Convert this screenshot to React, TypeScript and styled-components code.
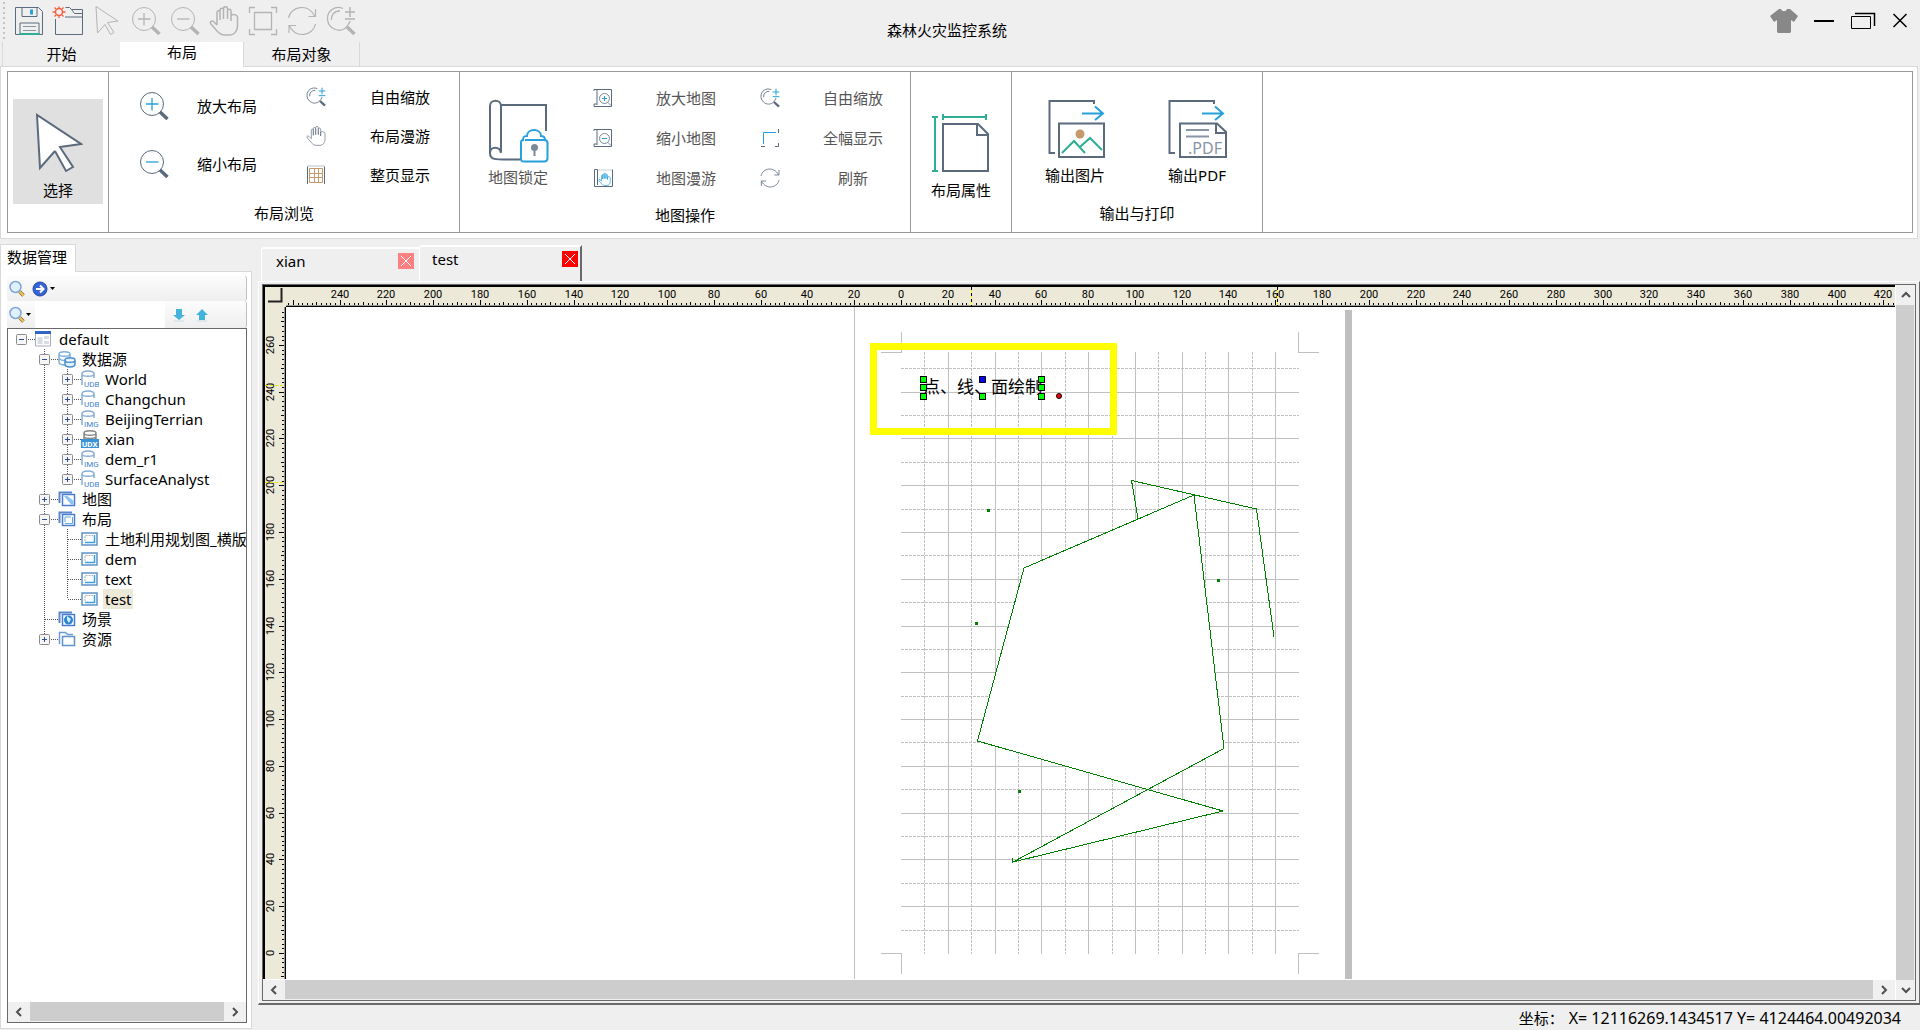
import React from "react";
import styled, { createGlobalStyle, css } from "styled-components";

const SLATE = "#5b6b7d";
const BLUE = "#27a0dc";
const TEAL = "#2fae95";
const TAN = "#c49a6c";
const MUTED = "#b4b4b4";
const LINE = "#d9d9d9";
const FRAME = "#696969";

const GlobalStyle = createGlobalStyle`
  *, *::before, *::after { box-sizing: border-box; }
  html, body, #root { height: 100%; }
  body {
    margin: 0;
    background: #efefef;
    color: #000;
    font-family: "Noto Sans", "Noto Sans CJK SC", sans-serif;
    font-size: 15px;
    line-height: 20px;
    overflow: hidden;
  }
  button, input { font: inherit; color: inherit; }
  button { border: 0; padding: 0; background: none; }
  svg { display: block; flex: none; }
`;

/* ---------- window shell ---------- */

const Shell = styled.div`
  height: 100vh;
  display: flex;
  flex-direction: column;
`;

const TitleBar = styled.header`
  display: grid;
  grid-template-columns: 1fr auto 1fr;
  height: 42px;
`;

const QuickTools = styled.div`
  display: flex;
  align-items: center;
  height: 41px;
  padding-left: 3px;
`;

const Grip = styled.span`
  width: 4px;
  height: 38px;
  margin-right: 2px;
  background: repeating-linear-gradient(#c4c4c4 0 2px, transparent 2px 5px) left / 2px 100% no-repeat;
`;

const QuickButton = styled.button`
  width: 39px;
  height: 36px;
  display: flex;
  align-items: center;
  justify-content: center;
`;

const AppTitle = styled.h1`
  margin: 0 26px 0 0;
  padding-top: 20px;
  font-size: 15px;
  font-weight: 400;
  line-height: 20px;
`;

const WindowButtons = styled.div`
  display: flex;
  justify-content: flex-end;
  align-items: center;
  gap: 15px;
  height: 42px;
  padding-right: 11px;
`;

const WindowButton = styled.button`
  display: flex;
`;

/* ---------- ribbon ---------- */

const RibbonTabs = styled.nav`
  display: flex;
  height: 24px;
  padding-left: 2px;
`;

const RibbonTab = styled.button<{ $active?: boolean; $width: number }>`
  width: ${(p) => p.$width}px;
  height: 24px;
  border-left: 1px solid ${(p) => (p.$active ? "#fff" : LINE)};
  ${(p) =>
    p.$active
      ? css`
          height: 25px;
          padding-bottom: 5px;
          background: #fff;
          z-index: 1;
        `
      : ""}
  &:last-child { border-right: 1px solid ${LINE}; }
`;

const RibbonFrame = styled.section`
  margin-right: 2px;
  padding: 4px 4px 5px 6px;
  border: 1px solid ${LINE};
  background: #fff;
`;

const Ribbon = styled.div`
  display: flex;
  height: 162px;
  border: 1px solid #999;
`;

const Group = styled.div<{ $width: number }>`
  display: flex;
  flex-direction: column;
  width: ${(p) => p.$width}px;
  border-right: 1px solid #999;
`;

const GroupBody = styled.div<{ $inset?: number; $gap?: number }>`
  flex: 1;
  display: flex;
  align-items: flex-start;
  justify-content: ${(p) => (p.$inset === undefined ? "center" : "flex-start")};
  padding-left: ${(p) => p.$inset ?? 0}px;
  gap: ${(p) => p.$gap ?? 0}px;
`;

const GroupTitle = styled.div<{ $low?: boolean }>`
  text-align: center;
  padding-bottom: ${(p) => (p.$low ? 7 : 9)}px;
`;

const BigButton = styled.button<{ $top: number; $disabled?: boolean }>`
  display: flex;
  flex-direction: column;
  align-items: center;
  gap: ${(p) => (p.$disabled ? 4 : 6)}px;
  min-width: 60px;
  margin-top: ${(p) => p.$top}px;
  color: ${(p) => (p.$disabled ? "#555" : "#000")};
`;

const SelectedTile = styled(BigButton)`
  width: 90px;
  height: 105px;
  padding-top: 13px;
  background: #e0e0e0;
`;

const ToolColumn = styled.div<{ $top: number; $row: number }>`
  display: grid;
  grid-auto-rows: ${(p) => p.$row}px;
  padding-top: ${(p) => p.$top}px;
`;

const ToolButton = styled.button<{ $gap: number; $disabled?: boolean }>`
  display: flex;
  align-items: center;
  gap: ${(p) => p.$gap}px;
  color: ${(p) => (p.$disabled ? "#555" : "#000")};
  span { width: 60px; text-align: center; }
`;

/* ---------- workspace ---------- */

const Workspace = styled.div`
  flex: 1;
  min-height: 0;
  display: grid;
  grid-template-columns: 252px minmax(0, 1fr);
  column-gap: 6px;
`;

const Sidebar = styled.aside`
  display: flex;
  flex-direction: column;
  min-height: 0;
  padding: 5px 0 1px;
`;

const SidebarTab = styled.div`
  align-self: flex-start;
  height: 28px;
  margin-bottom: -1px;
  padding: 2px 8px 4px 6px;
  border: 1px solid ${LINE};
  border-bottom: 0;
  background: #fff;
  z-index: 1;
`;

const SidebarPanel = styled.div`
  flex: 1;
  min-height: 0;
  display: flex;
  flex-direction: column;
  padding: 4px 4px 5px 6px;
  border: 1px solid ${LINE};
  background: #fff;
`;

const PanelBar = styled.div<{ $height: number }>`
  display: flex;
  align-items: center;
  height: ${(p) => p.$height}px;
  border-right: 1px solid #c0c0c0;
  border-radius: 3px;
  background: linear-gradient(#fcfcfc, #efefef);
`;

const IconButton = styled.button<{ $lead: number; $gap?: number }>`
  display: flex;
  align-items: center;
  gap: ${(p) => p.$gap ?? 0}px;
  margin-left: ${(p) => p.$lead}px;
`;

const SearchInput = styled.input`
  width: 130px;
  height: 100%;
  min-width: 0;
  margin-left: 4px;
  border: 0;
  background: #fff;
  outline: 0;
`;

const TreeBox = styled.div`
  flex: 1;
  min-height: 0;
  display: flex;
  flex-direction: column;
  border: 1px solid ${FRAME};
`;

const Tree = styled.ul`
  flex: 1;
  min-height: 0;
  margin: 0;
  padding: 0 0 0 8px;
  list-style: none;
  overflow: hidden;
`;

const TreeRow = styled.li`
  display: flex;
  align-items: center;
  height: 20px;
  white-space: nowrap;
`;

const IconSlot = styled.span`
  width: 22px;
  flex: none;
`;

const TreeLabel = styled.span<{ $selected?: boolean }>`
  padding: 0 2px;
  background: ${(p) => (p.$selected ? "#ece9d8" : "transparent")};
`;

const BranchButton = styled.button`
  display: flex;
`;

/* ---------- documents ---------- */

const Main = styled.main`
  display: flex;
  flex-direction: column;
  min-width: 0;
  min-height: 0;
`;

const DocTabs = styled.div`
  display: flex;
  align-items: flex-end;
  height: 42px;
  padding-left: 3px;
`;

const DocTab = styled.div<{ $active?: boolean }>`
  display: flex;
  align-items: flex-start;
  justify-content: space-between;
  width: ${(p) => (p.$active ? 163 : 158)}px;
  height: ${(p) => (p.$active ? 36 : 34)}px;
  padding: 4px ${(p) => (p.$active ? 2 : 5)}px 0 ${(p) => (p.$active ? 12 : 14)}px;
  line-height: 16px;
  border-top: 2px solid #fff;
  border-left: 1px solid #fff;
  border-right: ${(p) => (p.$active ? `2px solid ${FRAME}` : "0")};
  border-radius: 3px 0 0 0;
`;

const CloseButton = styled.button<{ $active?: boolean }>`
  display: flex;
  background: ${(p) => (p.$active ? "#f00" : "#ff8080")};
`;

const DocFrame = styled.div`
  flex: 1;
  min-height: 0;
  display: flex;
  padding: 2px 3px;
  border: 1px solid #fff;
  border-right-color: ${FRAME};
  border-bottom: 2px solid ${FRAME};
`;

const Viewport = styled.div`
  flex: 1;
  min-width: 0;
  display: grid;
  grid-template-columns: minmax(0, 1fr) 20px;
  border: 1px solid ${FRAME};
`;

const ViewColumn = styled.div`
  display: flex;
  flex-direction: column;
  min-width: 0;
  min-height: 0;
`;

const RuledArea = styled.div`
  flex: 1;
  min-height: 0;
  display: grid;
  grid-template-columns: 21px minmax(0, 1fr);
  grid-template-rows: 20px minmax(0, 1fr);
  border-left: 2px solid #000;
  border-top: 2px solid #000;
  background: #ece9d8;
`;

const RulerCell = styled.div<{ $side: "corner" | "top" | "left" }>`
  min-width: 0;
  min-height: 0;
  background: #ece9d8;
  ${(p) => (p.$side === "top" ? "border-bottom: 1px solid #000; box-shadow: inset 0 -1px #999;" : "")}
  ${(p) => (p.$side === "left" ? "border-right: 1px solid #000; box-shadow: inset -1px 0 #999; overflow: hidden;" : "")}
`;

const Canvas = styled.div`
  min-width: 0;
  min-height: 0;
  overflow: hidden;
  background: #fff;
`;

const ScrollTrack = styled.div<{ $vertical?: boolean }>`
  display: flex;
  flex: none;
  flex-direction: ${(p) => (p.$vertical ? "column" : "row")};
  ${(p) => (p.$vertical ? "width: 20px; border-left: 1px solid #fff;" : "height: 21px; border-top: 1px solid #fff;")}
  background: #f0f0f0;
`;

const ScrollButton = styled.button`
  display: flex;
  align-items: center;
  justify-content: center;
  min-width: 19px;
  min-height: 20px;
  ${ScrollTrack} > &[data-axis="x"] { width: 22px; }
`;

const ScrollThumb = styled.div<{ $vertical?: boolean }>`
  flex: 1;
  background: #cdcdcd;
  ${(p) => (p.$vertical ? "margin-right: 1px;" : "margin-bottom: 1px;")}
`;

const StatusBar = styled.footer`
  height: 25px;
  padding: 3px 19px 0 0;
  display: flex;
  justify-content: flex-end;
  gap: 5px;
`;

const Coordinates = styled.output`
  font-size: 16px;
`;

/* ---------- icons ---------- */

const Svg = ({ w, h, box, children }: { w: number; h: number; box?: string; children: React.ReactNode }) => (
  <svg width={w} height={h} viewBox={box ?? `0 0 ${w} ${h}`} fill="none" aria-hidden="true">
    {children}
  </svg>
);

const SaveIcon = () => (
  <Svg w={30} h={30}>
    <path d="M1.500 1.500h23l4 4v23h-27z" stroke={SLATE} />
    <path d="M8 1.500v9h15v-9" stroke={SLATE} />
    <path d="M16 3.500h3v5h-3z" fill={BLUE} />
    <path d="M6 28V17h19v11" stroke={SLATE} />
    <path d="M9 20.500h13M9 24.500h13" stroke="#8795a5" />
    <path d="M5.500 28h20" stroke={TEAL} strokeWidth="2" />
  </Svg>
);

const NewIcon = () => (
  <Svg w={32} h={30}>
    <path d="M3.500 13v15.500h27V3.500h-11l-2-2h-4M13 11h17M19.500 3.500l3 4h8" stroke={SLATE} />
    <circle cx="7" cy="6" r="3.500" stroke="#f2603c" strokeWidth="1.500" />
    <path d="M7 .5V2M7 10v2M.5 6H3M11 6h2.500M2.500 1.500l1.500 1.500M10 9l1.500 1.500M2.500 10.500L4 9M10 3l1.500-1.500" stroke="#f2603c" strokeWidth="1.300" />
  </Svg>
);

const CursorIcon = ({ size, color, width, fill }: { size: number; color: string; width: number; fill?: string }) => (
  <Svg w={size} h={Math.round(size * 1.24)} box="-2 -1 50 62">
    <path d="M2 2L46 31L26 33L38 53L31 58L20 38L5 55Z" stroke="none" fill={fill ?? "none"} />
    <path d="M20 38L5 55L2 2L46 31L25 34L38 54L31 58L20 38" stroke={color} strokeWidth={width} />
  </Svg>
);

const LensIcon = ({ sign, ring, mark, size = 30 }: { sign: "+" | "-"; ring: string; mark: string; size?: number }) => (
  <Svg w={size} h={size} box="0 0 30 30">
    <circle cx="13" cy="13" r="11.500" stroke={ring} />
    <path d="M21 21l7.500 7" stroke={ring} strokeWidth="3.500" />
    <path d={sign === "+" ? "M7 13h12.500M13 7v12.500" : "M7 13h12.500"} stroke={mark} strokeWidth="1.300" />
  </Svg>
);

const FreeZoomIcon = ({ size, ring, mark }: { size: number; ring: string; mark: string }) => (
  <Svg w={size} h={size} box="0 0 30 30">
    <path d="M17 2.500C9-1 1 5 1.500 13C2 23 15 29 22 19C23 17 24 16 24 15M14 5C8 5 5 9 5.500 14" stroke={ring} strokeWidth="1.300" />
    <path d="M21 21l7.500 7" stroke={ring} strokeWidth="3.500" />
    <path d="M19 6h10M24 1v10M19 13h10" stroke={mark} strokeWidth="1.500" />
  </Svg>
);

const HAND =
  "M8 19V6.500C8 4 11 4 11 6.500V14V4C11 1.500 14.500 1.500 14.500 4V13V2.500C14.500 0 18.500 0 18.500 2.500V13V5C18.500 2.500 22 2.500 22 5V15V10C22 8 28 8 28.500 11V20C28.500 25 25 29 21 29H15C12 29 10 27 8 25L2 18C0 15.500 3 14 5 16L8 19";

const HandIcon = ({ size, color, width = 1 }: { size: number; color: string; width?: number }) => (
  <Svg w={size} h={size} box="0 0 30 30">
    <path d={HAND} stroke={color} strokeWidth={width} />
  </Svg>
);

const ExtentIcon = ({ size, corner, inner }: { size: number; corner: string; inner: string }) => (
  <Svg w={size} h={size} box="0 0 30 30">
    <path d="M1.500 7V1.500H7M23 1.500h5.500V7M28.500 23v5.500H23M7 28.500H1.500V23" stroke={corner} strokeWidth="1.300" />
    <path d="M6.500 6.500h17v17h-17z" stroke={inner} strokeWidth="1.300" />
  </Svg>
);

const PartialExtentIcon = () => (
  <Svg w={20} h={20}>
    <path d="M3.500 16V4.500H16" stroke={BLUE} />
    <path d="M18.500 1v4M18.500 15v3.500H15M1 18.500h4" stroke={SLATE} />
  </Svg>
);

const RefreshIcon = ({ size, color }: { size: number; color: string }) => (
  <Svg w={size} h={size} box="0 0 30 30">
    <path d="M1.500 12C4 0 21-3 27.500 10M28.500 18C26 30 9 33 2.500 20M28.500 3v7.500h-7M2 27v-7.500h7" stroke={color} strokeWidth="1.200" />
  </Svg>
);

const PageGridIcon = () => (
  <Svg w={20} h={20}>
    <path d="M1.500 19V1.500M18.500 1.500V19" stroke={SLATE} />
    <path d="M1 1h18" stroke="#b9c1ca" />
    <path d="M3.500 3.500h13v14h-13zM3 8.500h14M3 12.500h14M8.500 3v14M12.500 3v14" stroke={TAN} />
  </Svg>
);

const MapSheet = ({ children }: { children: React.ReactNode }) => (
  <Svg w={20} h={20}>
    <path d="M1 3V1.500h3V17M4 1.500h14.500v17H1V16h3" stroke={SLATE} />
    {children}
  </Svg>
);

const MapZoomIcon = ({ sign }: { sign: "+" | "-" }) => (
  <MapSheet>
    <circle cx="11.500" cy="10.500" r="5" stroke="#7b8999" />
    <path d="M15 14.500l3 3" stroke="#7b8999" />
    <path d={sign === "+" ? "M9 10.500h5M11.500 8v5" : "M9 10.500h5"} stroke={BLUE} />
  </MapSheet>
);

const MapHandIcon = () => (
  <Svg w={20} h={20}>
    <path d="M4.500 17V1.500H1.500v17h18v-17" stroke={SLATE} />
    <path d="M5 2h14" stroke="#ccd2d8" />
    <g transform="translate(5 5) scale(0.43)">
      <path d={HAND} stroke={BLUE} strokeWidth="1.700" />
    </g>
  </Svg>
);

const MapLockIcon = () => (
  <Svg w={62} h={64}>
    <path d="M14 53V7C14 0 3 0 3 7V54C3 62 9 60.500 35 60.500M14 6H59V32M3 54C3 47 13 47 14 54" stroke={SLATE} strokeWidth="2" />
    <path d="M38 41H57C59 41 60.500 42 60.500 44V59C60.500 62 59 62.500 57 62.500H37C35 62.500 34 62 34 59V44C34 42 35 41 36 41C36 37 38 37 40 37C40 29 54 29 54 37C57 37 58 38 58 41" stroke={BLUE} strokeWidth="2" fill="#fff" />
    <circle cx="47.500" cy="48.500" r="3.500" fill="#7b8999" />
    <path d="M47.500 50v7" stroke="#7b8999" strokeWidth="2" />
  </Svg>
);

const PropertyIcon = () => (
  <Svg w={60} h={60}>
    <path d="M4 3v54M1 3h6M1 57h6M12 3h43M12 0v6M55 0v6" stroke={TEAL} strokeWidth="2" />
    <path d="M12 10H47L57 20V57H12ZM46 10V21H57" stroke={SLATE} strokeWidth="2" />
  </Svg>
);

const OutputBack = () => (
  <>
    <path d="M8 54H2.500V2H47V5" stroke={SLATE} strokeWidth="2" />
    <path d="M35 14.500H56M48 7.500L56 14.500L48 21" stroke={BLUE} strokeWidth="2" />
  </>
);

const OutputImageIcon = () => (
  <Svg w={60} h={60} box="-2 0 60 60">
    <OutputBack />
    <path d="M12 24.500H57V58H12Z" stroke={SLATE} strokeWidth="2" />
    <circle cx="33" cy="35" r="4.500" fill={TAN} />
    <path d="M15 54L27 42L38 54M33 48L43 39L55 51" stroke={TEAL} strokeWidth="2" />
  </Svg>
);

const OutputPdfIcon = () => (
  <Svg w={60} h={60}>
    <OutputBack />
    <path d="M13 24.500H50L59 33V58H13ZM49 24.500V34H59" stroke={SLATE} strokeWidth="2" />
    <path d="M19 31h23M19 37.500h23" stroke="#8795a5" strokeWidth="2" />
    <text x="21" y="55" fontSize="16" fill="#8795a5">.PDF</text>
  </Svg>
);

const ShirtIcon = () => (
  <Svg w={28} h={26}>
    <path d="M9 1H11C12 4 16 4 17 1H20L28 8L24 14L21 12V24L20 25H8L7 24V12L4 14L0 8Z" fill="#888" />
  </Svg>
);

const MinimizeIcon = () => (
  <Svg w={22} h={20}>
    <path d="M1 10h20" stroke="#000" strokeWidth="2" />
  </Svg>
);

const RestoreIcon = () => (
  <Svg w={26} h={18}>
    <path d="M1.500 4.500h19v12h-19z" stroke="#000" />
    <path d="M5 1.500h19.500V14" stroke="#000" strokeWidth="1.500" />
  </Svg>
);

const CloseIcon = () => (
  <Svg w={18} h={18}>
    <path d="M2.500 2l13 13M15.500 2L2.500 15" stroke="#000" strokeWidth="1.500" />
  </Svg>
);

const TabCloseIcon = () => (
  <Svg w={16} h={16}>
    <path d="M3 3l10 10M13 3L3 13" stroke="#fff" />
  </Svg>
);

const Chevron = ({ dir }: { dir: "left" | "right" | "up" | "down" }) => {
  const d = {
    left: "M7 1L3 5L7 9",
    right: "M3 1L7 5L3 9",
    up: "M1 7L5 3L9 7",
    down: "M1 3L5 7L9 3",
  }[dir];
  return (
    <Svg w={10} h={10}>
      <path d={d} stroke="#505050" strokeWidth="2" />
    </Svg>
  );
};

const MagnifierIcon = () => (
  <Svg w={18} h={18}>
    <path d="M11.500 11.500l4 4" stroke="#8a6a2a" strokeWidth="3.500" />
    <path d="M11.500 11.500l4 4" stroke="#f0c860" strokeWidth="2" />
    <circle cx="7.500" cy="7" r="5.500" fill="#dff1ff" stroke="#7fa6d8" strokeWidth="1.500" />
  </Svg>
);

const GoIcon = () => (
  <Svg w={16} h={16}>
    <circle cx="8" cy="8" r="7" fill="#3563d8" stroke="#2446a0" />
    <path d="M4 8h7M8 4.500L11.500 8L8 11.500" stroke="#fff" strokeWidth="2" />
  </Svg>
);

const DropMark = () => (
  <Svg w={5} h={3}>
    <path d="M0 0h5L2.500 3z" fill="#000" />
  </Svg>
);

const ArrowMark = ({ up }: { up?: boolean }) => (
  <Svg w={14} h={14}>
    <path d={up ? "M7 1L13 7H10V12H4V7H1Z" : "M7 12L13 7H10V1H4V7H1Z"} fill="#45b4dc" />
    <path d="M2 13h10" stroke="#c8dce4" />
  </Svg>
);

/* ---------- tree ---------- */

type Glyph = "root" | "source" | "udb" | "img" | "udx" | "maps" | "layouts" | "layout" | "scene" | "folder";

const TreeGlyph = ({ kind }: { kind: Glyph }) => {
  switch (kind) {
    case "root":
      return (
        <Svg w={18} h={18}>
          <path d="M.5 2v14h15V2" fill="#fff" stroke="#a8adb8" />
          <path d="M0 1h16v3H0z" fill="#2f63c8" />
          <path d="M2.500 7h5v7h-5zM9 6h5v3H9zM9 11h5v3H9z" fill="#d8dce4" />
        </Svg>
      );
    case "source":
      return (
        <Svg w={18} h={18}>
          <path d="M1 4C1 1 12 1 12 4S1 7 1 4V12C1 14 4 15 7 15M1 8C2 10 5 11 8 10M12 4V7" stroke="#7fb0dc" strokeWidth="1.500" />
          <path d="M7 10C7 7 17 7 17 10V14C17 18 7 18 7 14ZM7 10C7 13 17 13 17 10" fill="#dcefff" stroke="#4d8fd0" strokeWidth="1.500" />
        </Svg>
      );
    case "udb":
    case "img":
      return (
        <Svg w={18} h={18}>
          <path d="M1 4C1 0 13 0 13 4C13 7 1 7 1 4V15M13 4V8" stroke="#86aed6" strokeWidth="1.500" />
          <text x="3" y="17" fontSize="8" fontFamily="Roboto, sans-serif" fill="#3f84cc">
            {kind === "udb" ? "UDB" : "IMG"}
          </text>
        </Svg>
      );
    case "udx":
      return (
        <Svg w={18} h={18}>
          <path d="M3 3C3 0 15 0 15 3S3 6 3 3V10M15 3V10M3 7C5 9 13 9 15 7" stroke="#888" strokeWidth="1.500" />
          <path d="M0 9h18v9H0z" fill="#3a94d4" />
          <text x="1" y="17" fontSize="8" fontWeight="700" fontFamily="Roboto, sans-serif" fill="#fff">UDX</text>
        </Svg>
      );
    case "maps":
    case "layouts":
    case "scene":
      return (
        <Svg w={18} h={18}>
          <path d="M1.500 13V2.500H14" stroke="#5a86cc" strokeWidth="2" />
          <path d="M4.500 4.500h12v11h-12z" fill="#fff" stroke="#4a7cd0" strokeWidth="1.500" />
          {kind === "maps" && <path d="M6 6h3.500l6 5v3.500H13z" fill="#8cc4f0" />}
          {kind === "layouts" && <path d="M7 13.500h7.500V7M7 12V7h6" stroke="#5aa8dc" />}
          {kind === "scene" && <circle cx="10.500" cy="10" r="4.500" fill="#2c86cc" />}
          {kind === "scene" && <path d="M9 6l4 3-2 4-2-3z" fill="#d4ecfa" />}
        </Svg>
      );
    case "layout":
      return (
        <Svg w={18} h={18}>
          <path d="M1 3h15v12H1z" fill="#fff" stroke="#5e92cc" strokeWidth="1.500" />
          <path d="M4 12.500h9.500V5" stroke="#3f9fdc" strokeWidth="1.500" />
          <path d="M4 11V5.500H12" stroke="#b0b0b0" strokeDasharray="2 1" />
        </Svg>
      );
    default:
      return (
        <Svg w={18} h={18}>
          <path d="M1.500 14V2.500h6l2 2H15" stroke="#6c9cd4" strokeWidth="1.500" />
          <path d="M4.500 6.500h12v9h-12z" fill="#fff" stroke="#5e92cc" strokeWidth="1.500" />
        </Svg>
      );
  }
};

interface Node {
  name: string;
  level: 0 | 1 | 2;
  glyph: Glyph;
  toggle?: "+" | "-";
  last?: boolean;
  trunk?: boolean;
  selected?: boolean;
}

const NODES: Node[] = [
  { name: "default", level: 0, glyph: "root", toggle: "-" },
  { name: "数据源", level: 1, glyph: "source", toggle: "-" },
  { name: "World", level: 2, glyph: "udb", toggle: "+", trunk: true },
  { name: "Changchun", level: 2, glyph: "udb", toggle: "+", trunk: true },
  { name: "BeijingTerrian", level: 2, glyph: "img", toggle: "+", trunk: true },
  { name: "xian", level: 2, glyph: "udx", toggle: "+", trunk: true },
  { name: "dem_r1", level: 2, glyph: "img", toggle: "+", trunk: true },
  { name: "SurfaceAnalyst", level: 2, glyph: "udb", toggle: "+", trunk: true, last: true },
  { name: "地图", level: 1, glyph: "maps", toggle: "+" },
  { name: "布局", level: 1, glyph: "layouts", toggle: "-" },
  { name: "土地利用规划图_横版", level: 2, glyph: "layout", trunk: true },
  { name: "dem", level: 2, glyph: "layout", trunk: true },
  { name: "text", level: 2, glyph: "layout", trunk: true },
  { name: "test", level: 2, glyph: "layout", trunk: true, last: true, selected: true },
  { name: "场景", level: 1, glyph: "scene" },
  { name: "资源", level: 1, glyph: "folder", toggle: "+", last: true },
];

const dots = { stroke: "#555", strokeDasharray: "1 1", shapeRendering: "crispEdges" as const };

const Trunk = ({ line }: { line?: boolean }) => (
  <Svg w={23} h={20}>{line && <path d="M5.500 0V20" {...dots} />}</Svg>
);

const Branch = ({ node }: { node: Node }) => (
  <Svg w={19} h={20}>
    {node.level > 0 && <path d={node.last ? "M5.500 0V10" : "M5.500 0V20"} {...dots} />}
    <path d="M6 10.500H19" {...dots} />
    {node.toggle && (
      <>
        <rect x="0.500" y="5.500" width="10" height="10" rx="1" fill="#f6f6f6" stroke="#8c8c8c" />
        <path d={node.toggle === "+" ? "M3 10.500h5M5.500 8v5" : "M3 10.500h5"} stroke="#2c4c9c" />
      </>
    )}
  </Svg>
);

const TreeItem = ({ node }: { node: Node }) => (
  <TreeRow>
    {node.level > 0 && <Trunk />}
    {node.level > 1 && <Trunk line={node.trunk} />}
    {node.toggle ? (
      <BranchButton aria-label={node.toggle === "+" ? "展开" : "折叠"}>
        <Branch node={node} />
      </BranchButton>
    ) : (
      <Branch node={node} />
    )}
    <IconSlot>
      <TreeGlyph kind={node.glyph} />
    </IconSlot>
    <TreeLabel $selected={node.selected}>{node.name}</TreeLabel>
  </TreeRow>
);

/* ---------- layout canvas ---------- */

const SCALE = 2.339;
const mapX = (mm: number) => Math.round(615 + mm * SCALE);
const mapY = (mm: number) => Math.round(646 - mm * SCALE);
const range = (from: number, to: number, step: number) =>
  Array.from({ length: Math.floor((to - from) / step) + 1 }, (_, i) => from + i * step);
const tickSize = (v: number) => (v % 20 === 0 ? 5 : v % 10 === 0 ? 3 : 2);

const TopRuler = () => (
  <svg width="100%" height="19" overflow="hidden" shapeRendering="crispEdges">
    {range(-262, 428, 2).map((v) => (
      <path key={v} d={`M${mapX(v)}.5 ${18 - tickSize(v)}V18`} stroke="#000" />
    ))}
    {range(-240, 420, 20).map((v) => (
      <text key={v} x={mapX(v)} y="11" fontSize="11" fontFamily="Roboto, sans-serif" textAnchor="middle">
        {Math.abs(v)}
      </text>
    ))}
    {[685, 991].map((x) => (
      <g key={x}>
        <path d={`M${x}.5 0V19`} stroke="#000" strokeDasharray="3 3" />
        <path d={`M${x}.5 3V19`} stroke="#ff0" strokeDasharray="3 3" />
      </g>
    ))}
  </svg>
);

const LeftRuler = () => (
  <svg width="20" height="100%" shapeRendering="crispEdges">
    {range(-10, 274, 2).map((v) => (
      <path key={v} d={`M${19 - tickSize(v)} ${mapY(v)}.5H19`} stroke="#000" />
    ))}
    {range(0, 260, 20).map((v) => (
      <text
        key={v}
        transform={`translate(9 ${mapY(v)}) rotate(-90)`}
        fontSize="11"
        fontFamily="Roboto, sans-serif"
        textAnchor="middle"
      >
        {v}
      </text>
    ))}
    {[78, 175].map((y) => (
      <path key={y} d={`M0 ${y}.5H20`} stroke="#e6e600" strokeDasharray="3 2" />
    ))}
  </svg>
);

const Handle = ({ x, y }: { x: number; y: number }) => (
  <rect x={x - 2.5} y={y - 2.5} width="6" height="6" fill="#0f0" stroke="#000" />
);

const LayoutDrawing = () => (
  <svg width="100%" height="100%" fill="none">
    <g stroke="#c0c0c0" shapeRendering="crispEdges">
      <path d={`M${mapX(-20)}.5 0V2000`} />
      {range(10, 160, 10).map((v) => (
        <path key={`x${v}`} d={`M${mapX(v)}.5 45V647`} strokeDasharray={v % 20 ? "3 1" : undefined} />
      ))}
      {range(10, 250, 10).map((v) => (
        <path key={`y${v}`} d={`M615 ${mapY(v)}.5H1013`} strokeDasharray={v % 20 ? "3 1" : undefined} />
      ))}
      <path d="M615.5 25V45.500H595M1012.500 25V45.500H1033M595 646.500H615.500V667M1033 646.500H1012.500V667" />
    </g>
    <path d="M1059 3h7V2000h-7z" fill="#c0c0c0" />
    <g stroke="#008000" shapeRendering="crispEdges">
      <path d="M908 188L738 261L691.500 434L937 504L727 555L938 441.500Z" fill="#fff" />
      <path d="M852 211.500L845.500 173.500L970.500 202L988 330" />
    </g>
    <g fill="#008000">
      <path d="M701 202h3v3h-3zM931 272h3v3h-3zM689 315h3v3h-3zM732 483h3v3h-3zM726 551h1v5h-1z" />
    </g>
    <rect x="587.5" y="39.5" width="240" height="85" stroke="#ff0" strokeWidth="7" />
    <text x="637" y="86" fontSize="17" fontFamily='"Noto Sans CJK SC", sans-serif' fill="#000">
      点、线、面绘制
    </text>
    {[637, 755].map((x) => [72, 80, 89].map((y) => <Handle key={`${x}-${y}`} x={x} y={y} />))}
    <Handle x={696} y={89} />
    <rect x="693.5" y="69.5" width="6" height="6" fill="#0a0ae0" stroke="#000" />
    <path d="M693 69l7 7M700 69l-7 7" stroke="#00f" />
    <circle cx="773" cy="89" r="2.500" fill="#f00" stroke="#000" />
  </svg>
);

/* ---------- page ---------- */

const QUICK: [string, React.ReactNode][] = [
  ["保存", <SaveIcon />],
  ["新建", <NewIcon />],
  ["选择", <CursorIcon size={25} color={MUTED} width={2} />],
  ["放大", <LensIcon sign="+" ring={MUTED} mark={MUTED} />],
  ["缩小", <LensIcon sign="-" ring={MUTED} mark={MUTED} />],
  ["漫游", <HandIcon size={30} color={MUTED} width={1.5} />],
  ["全幅", <ExtentIcon size={30} corner={MUTED} inner={MUTED} />],
  ["刷新", <RefreshIcon size={30} color={MUTED} />],
  ["自由缩放", <FreeZoomIcon size={30} ring={MUTED} mark={MUTED} />],
];

const Tool = ({ icon, label, gap, disabled }: { icon: React.ReactNode; label: string; gap: number; disabled?: boolean }) => (
  <ToolButton $gap={gap} $disabled={disabled}>
    {icon}
    <span>{label}</span>
  </ToolButton>
);

export default function App() {
  return (
    <Shell>
      <GlobalStyle />
      <TitleBar>
        <QuickTools>
          <Grip />
          {QUICK.map(([name, icon]) => (
            <QuickButton key={name} aria-label={name}>{icon}</QuickButton>
          ))}
        </QuickTools>
        <AppTitle>森林火灾监控系统</AppTitle>
        <WindowButtons>
          <WindowButton aria-label="皮肤"><ShirtIcon /></WindowButton>
          <WindowButton aria-label="最小化"><MinimizeIcon /></WindowButton>
          <WindowButton aria-label="还原"><RestoreIcon /></WindowButton>
          <WindowButton aria-label="关闭"><CloseIcon /></WindowButton>
        </WindowButtons>
      </TitleBar>

      <RibbonTabs>
        <RibbonTab $width={118}>开始</RibbonTab>
        <RibbonTab $width={123} $active>布局</RibbonTab>
        <RibbonTab $width={117}>布局对象</RibbonTab>
      </RibbonTabs>
      <RibbonFrame>
        <Ribbon>
          <Group $width={101}>
            <GroupBody>
              <SelectedTile $top={27}>
                <CursorIcon size={50} color={SLATE} width={2} fill="#fff" />
                选择
              </SelectedTile>
            </GroupBody>
          </Group>
          <Group $width={351}>
            <GroupBody $inset={30} $gap={49}>
              <ToolColumn $top={5} $row={58}>
                <Tool gap={28} icon={<LensIcon sign="+" ring={SLATE} mark={BLUE} />} label="放大布局" />
                <Tool gap={28} icon={<LensIcon sign="-" ring={SLATE} mark={BLUE} />} label="缩小布局" />
              </ToolColumn>
              <ToolColumn $top={5} $row={39}>
                <Tool gap={44} icon={<FreeZoomIcon size={20} ring={SLATE} mark={BLUE} />} label="自由缩放" />
                <Tool gap={44} icon={<HandIcon size={20} color={SLATE} />} label="布局漫游" />
                <Tool gap={44} icon={<PageGridIcon />} label="整页显示" />
              </ToolColumn>
            </GroupBody>
            <GroupTitle>布局浏览</GroupTitle>
          </Group>
          <Group $width={451}>
            <GroupBody $inset={27} $gap={44}>
              <BigButton $top={27} $disabled>
                <MapLockIcon />
                地图锁定
              </BigButton>
              <ToolColumn $top={6} $row={40}>
                <Tool disabled gap={43} icon={<MapZoomIcon sign="+" />} label="放大地图" />
                <Tool disabled gap={43} icon={<MapZoomIcon sign="-" />} label="缩小地图" />
                <Tool disabled gap={43} icon={<MapHandIcon />} label="地图漫游" />
              </ToolColumn>
              <ToolColumn $top={6} $row={40}>
                <Tool disabled gap={43} icon={<FreeZoomIcon size={20} ring={SLATE} mark={BLUE} />} label="自由缩放" />
                <Tool disabled gap={43} icon={<PartialExtentIcon />} label="全幅显示" />
                <Tool disabled gap={43} icon={<RefreshIcon size={20} color={SLATE} />} label="刷新" />
              </ToolColumn>
            </GroupBody>
            <GroupTitle $low>地图操作</GroupTitle>
          </Group>
          <Group $width={101}>
            <GroupBody>
              <BigButton $top={42}>
                <PropertyIcon />
                布局属性
              </BigButton>
            </GroupBody>
          </Group>
          <Group $width={251}>
            <GroupBody $inset={33} $gap={62}>
              <BigButton $top={27}>
                <OutputImageIcon />
                输出图片
              </BigButton>
              <BigButton $top={27}>
                <OutputPdfIcon />
                输出PDF
              </BigButton>
            </GroupBody>
            <GroupTitle>输出与打印</GroupTitle>
          </Group>
        </Ribbon>
      </RibbonFrame>

      <Workspace>
        <Sidebar>
          <SidebarTab>数据管理</SidebarTab>
          <SidebarPanel>
            <PanelBar $height={25}>
              <IconButton $lead={1} aria-label="查找"><MagnifierIcon /></IconButton>
              <IconButton $lead={6} $gap={2} aria-label="转到"><GoIcon /><DropMark /></IconButton>
            </PanelBar>
            <PanelBar $height={27}>
              <IconButton $lead={1} aria-label="查找选项"><MagnifierIcon /><DropMark /></IconButton>
              <SearchInput aria-label="查找内容" />
              <IconButton $lead={7} aria-label="下一个"><ArrowMark /></IconButton>
              <IconButton $lead={9} aria-label="上一个"><ArrowMark up /></IconButton>
            </PanelBar>
            <TreeBox>
              <Tree>
                {NODES.map((n, i) => (
                  <TreeItem key={i} node={n} />
                ))}
              </Tree>
              <ScrollTrack>
                <ScrollButton data-axis="x" aria-label="向左"><Chevron dir="left" /></ScrollButton>
                <ScrollThumb />
                <ScrollButton data-axis="x" aria-label="向右"><Chevron dir="right" /></ScrollButton>
              </ScrollTrack>
            </TreeBox>
          </SidebarPanel>
        </Sidebar>

        <Main>
          <DocTabs>
            <DocTab>
              xian
              <CloseButton aria-label="关闭 xian"><TabCloseIcon /></CloseButton>
            </DocTab>
            <DocTab $active>
              test
              <CloseButton $active aria-label="关闭 test"><TabCloseIcon /></CloseButton>
            </DocTab>
          </DocTabs>
          <DocFrame>
            <Viewport>
              <ViewColumn>
                <RuledArea>
                  <RulerCell $side="corner">
                    <Svg w={20} h={19}>
                      <path d="M3 14.500h13.500V1" stroke="#222" strokeWidth="2" />
                    </Svg>
                  </RulerCell>
                  <RulerCell $side="top"><TopRuler /></RulerCell>
                  <RulerCell $side="left"><LeftRuler /></RulerCell>
                  <Canvas><LayoutDrawing /></Canvas>
                </RuledArea>
                <ScrollTrack>
                  <ScrollButton data-axis="x" aria-label="向左"><Chevron dir="left" /></ScrollButton>
                  <ScrollThumb />
                  <ScrollButton data-axis="x" aria-label="向右"><Chevron dir="right" /></ScrollButton>
                </ScrollTrack>
              </ViewColumn>
              <ScrollTrack $vertical>
                <ScrollButton aria-label="向上"><Chevron dir="up" /></ScrollButton>
                <ScrollThumb $vertical />
                <ScrollButton aria-label="向下"><Chevron dir="down" /></ScrollButton>
              </ScrollTrack>
            </Viewport>
          </DocFrame>
          <StatusBar>
            <span>坐标：</span>
            <Coordinates>X= 12116269.1434517 Y= 4124464.00492034</Coordinates>
          </StatusBar>
        </Main>
      </Workspace>
    </Shell>
  );
}
